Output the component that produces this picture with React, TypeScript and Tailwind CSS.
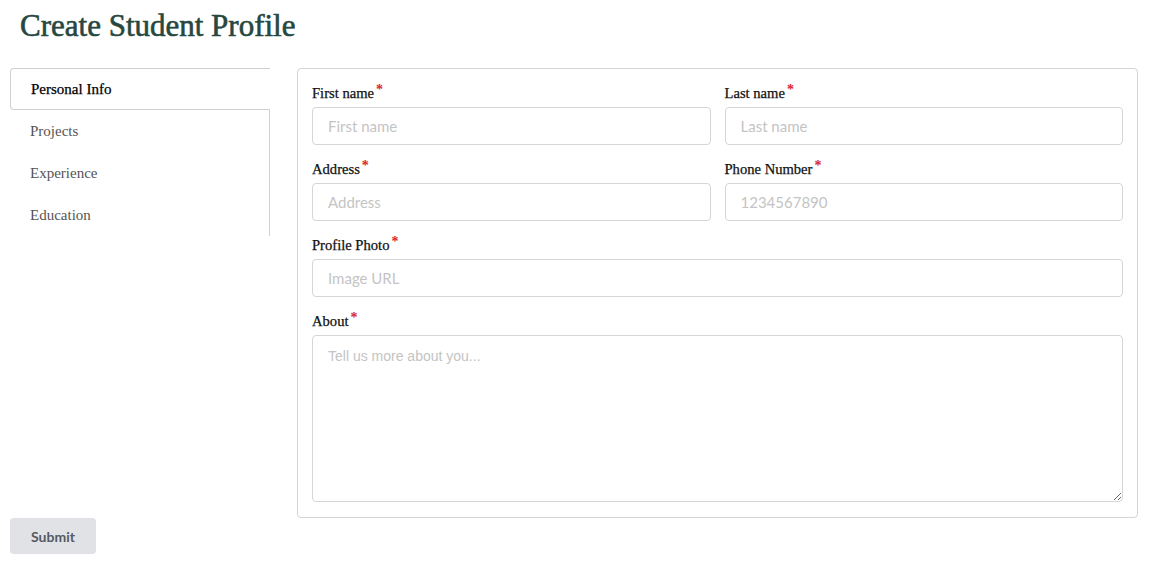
import React from "react";

const serif = "font-['Liberation_Serif','DejaVu_Serif',serif]";

function Label({ text }: { text: string }) {
  return (
    <label className={`${serif} block text-[14.6px] leading-[20px] font-normal text-[#111] mb-[4px] [-webkit-text-stroke:0.25px_#111]`}>
      {text}
      <sup className="text-[#d9262c] text-[14px] ml-[2px] top-[-4px] font-bold [-webkit-text-stroke:0px_transparent]">*</sup>
    </label>
  );
}

function Input({ placeholder }: { placeholder: string }) {
  return (
    <input
      placeholder={placeholder}
      className="w-full h-[38px] border border-[#d6d6d6] rounded-[4px] px-[15px] text-[15px] font-['Lato',sans-serif] text-[#333] placeholder:text-[#c4c4c4] outline-none bg-white"
    />
  );
}

export default function App() {
  const tabs = ["Personal Info", "Projects", "Experience", "Education"];
  return (
    <div className="w-[1151px] h-[561px] bg-white relative">
      <h1 className={`${serif} text-[31px] leading-[36px] text-[#27473f] pl-[20px] pt-[8px] font-normal [-webkit-text-stroke:0.6px_#27473f]`}>
        Create Student Profile
      </h1>
      <div className="flex items-start pl-[10px] pt-[24px] gap-[27px]">
        <div className="w-[260px] flex flex-col">
          {tabs.map((t, i) =>
            i === 0 ? (
              <div
                key={t}
                className={`${serif} h-[42px] flex items-center pl-[20px] text-[15px] text-black border border-r-0 border-[#d0d0d0] rounded-l-[4px] [-webkit-text-stroke:0.25px_#000]`}
              >
                {t}
              </div>
            ) : (
              <div
                key={t}
                className={`${serif} h-[42px] flex items-center pl-[20px] text-[15px] text-[#555] border-r border-[#d0d0d0]`}
              >
                {t}
              </div>
            )
          )}
        </div>
        <div className="w-[841px] h-[450px] border border-[#d4d4d4] rounded-[4px] px-[14px] pt-[14px] pb-[15px] flex flex-col gap-[14px]">
          <div className="grid grid-cols-2 gap-x-[14px]">
            <div>
              <Label text="First name" />
              <Input placeholder="First name" />
            </div>
            <div>
              <Label text="Last name" />
              <Input placeholder="Last name" />
            </div>
          </div>
          <div className="grid grid-cols-2 gap-x-[14px]">
            <div>
              <Label text="Address" />
              <Input placeholder="Address" />
            </div>
            <div>
              <Label text="Phone Number" />
              <Input placeholder="1234567890" />
            </div>
          </div>
          <div>
            <Label text="Profile Photo" />
            <Input placeholder="Image URL" />
          </div>
          <div className="flex-1 flex flex-col">
            <Label text="About" />
            <textarea
              placeholder="Tell us more about you..."
              className="w-full flex-1 border border-[#d6d6d6] rounded-[4px] px-[15px] py-[10px] text-[14px] font-['Liberation_Sans',Arial,sans-serif] placeholder:text-[#c4c4c4] outline-none"
            />
          </div>
        </div>
      </div>
      <button className="absolute left-[10px] top-[518px] w-[86px] h-[36px] bg-[#e1e2e5] rounded-[4px] text-[14px] font-bold font-['Lato',sans-serif] text-[#555a62]">
        Submit
      </button>
    </div>
  );
}
